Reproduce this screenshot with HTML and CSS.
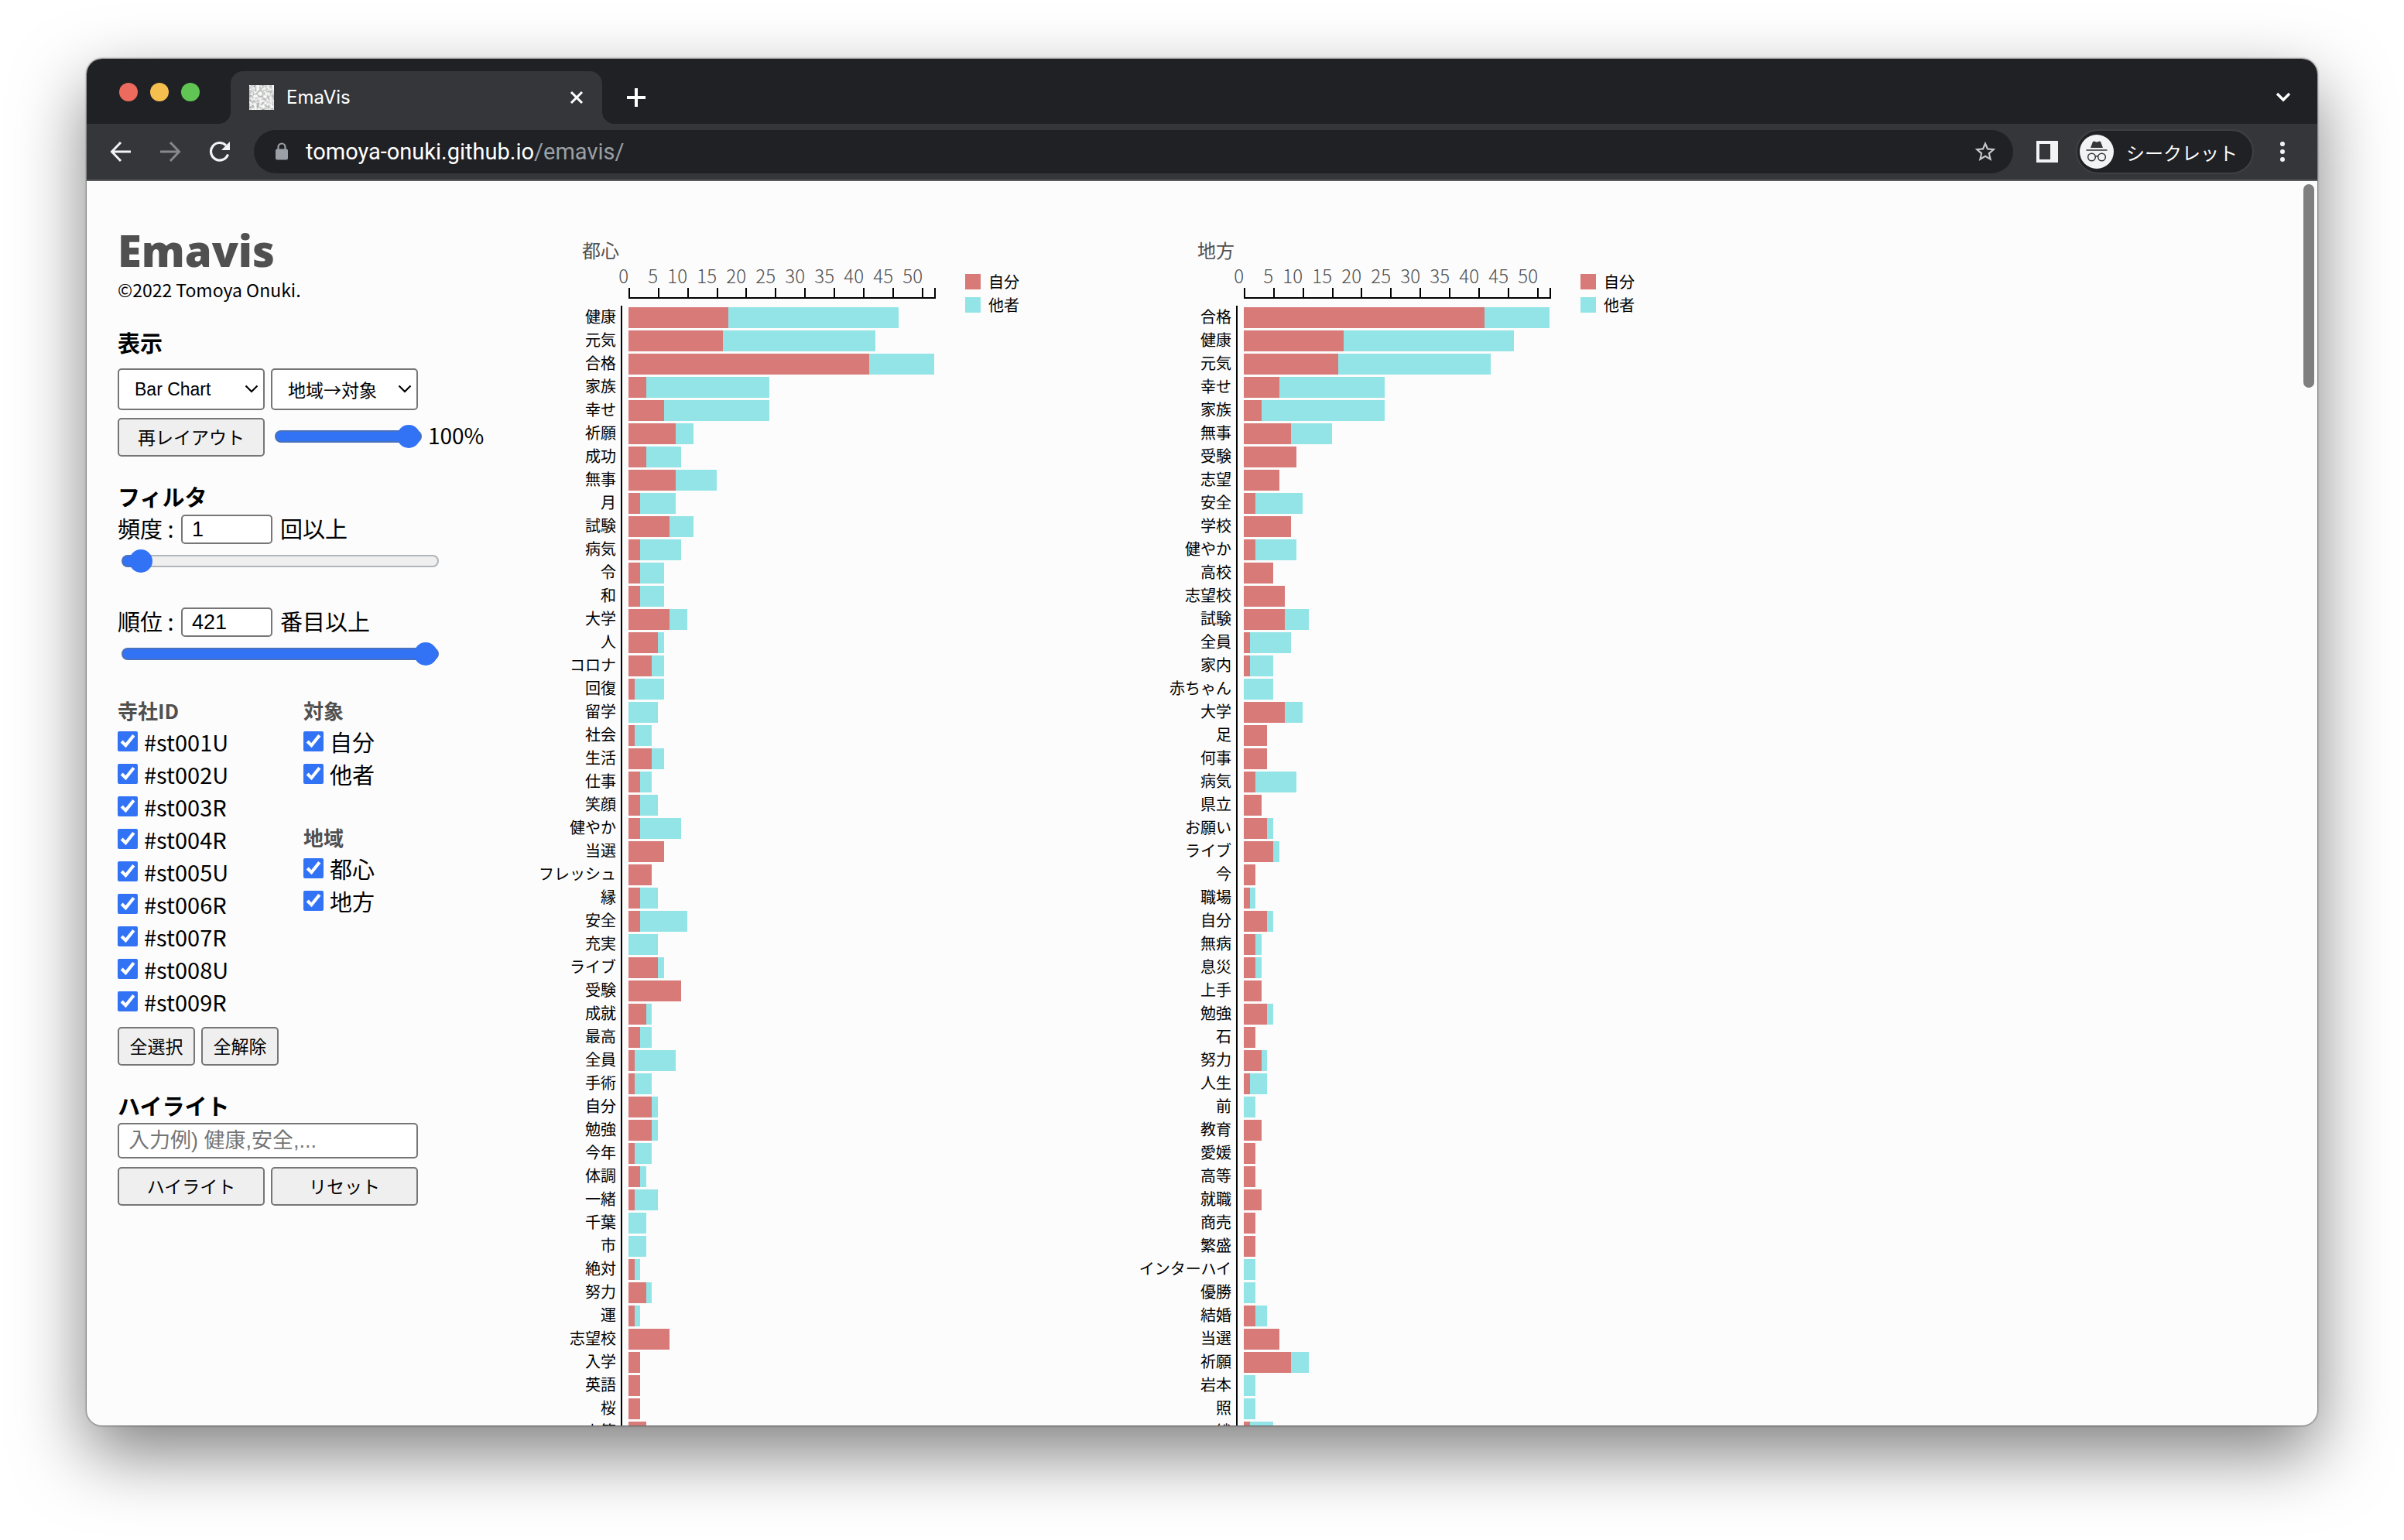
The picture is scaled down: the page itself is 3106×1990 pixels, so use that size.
FILE: index.html
```html
<!DOCTYPE html>
<html lang="ja">
<head>
<meta charset="utf-8">
<title>EmaVis</title>
<link rel="stylesheet" href="styles.css">
</head>
<body>
<div class="window">
  <header class="tabstrip">
    <div class="lights"><span class="light light-close"></span><span class="light light-min"></span><span class="light light-max"></span></div>
    <div class="tab">
      <svg class="favicon" viewBox="0 0 32 32" aria-hidden="true">
        <filter id="grain" x="0" y="0" width="1" height="1"><feTurbulence type="fractalNoise" baseFrequency="0.3" numOctaves="3" seed="4"/><feColorMatrix values="1.2 0 0 0 0.12  1.2 0 0 0 0.13  1.2 0 0 0 0.12  0 0 0 0 1"/></filter>
        <rect width="32" height="32" filter="url(#grain)"/>
      </svg>
      <span class="tab-title">EmaVis</span>
      <button class="icon-button tab-close" aria-label="閉じる"><svg width="18" height="18" viewBox="0 0 18 18"><path d="M2 2l14 14M16 2L2 16" stroke="#fff" stroke-width="3" fill="none"/></svg></button>
    </div>
    <button class="icon-button new-tab" aria-label="新しいタブ"><svg width="24" height="24" viewBox="0 0 24 24"><path d="M12 0v24M0 12h24" stroke="#fff" stroke-width="4" fill="none"/></svg></button>
    <button class="icon-button tab-list" aria-label="タブを検索"><svg width="20" height="14" viewBox="0 0 20 14"><path d="M2 2l8 8 8-8" stroke="#fff" stroke-width="3.4" fill="none"/></svg></button>
  </header>
  <nav class="toolbar">
    <button class="icon-button nav-button" aria-label="戻る"><svg width="28" height="28" viewBox="0 0 28 28"><path d="M27 14H3M14 2L2.500 14 14 26" stroke="#f1f3f4" stroke-width="3" fill="none"/></svg></button>
    <button class="icon-button nav-button" aria-label="進む"><svg width="28" height="28" viewBox="0 0 28 28"><path d="M1 14h24M14 2l11.500 12L14 26" stroke="#86888b" stroke-width="3" fill="none"/></svg></button>
    <button class="icon-button nav-button" aria-label="再読み込み"><svg width="28" height="28" viewBox="0 0 28 28"><path d="M24.500 17.500A11.300 11.300 0 1 1 22 6" stroke="#f1f3f4" stroke-width="3.200" fill="none"/><path d="M27 1v11H16z" fill="#f1f3f4"/></svg></button>
    <div class="omnibox">
      <svg width="18" height="24" viewBox="0 0 18 24" aria-hidden="true"><path d="M4.500 9V6a4.500 4.500 0 0 1 9 0v3" stroke="#9aa0a6" stroke-width="2.200" fill="none"/><rect x="1" y="8.500" width="16" height="14" rx="2" fill="#9aa0a6"/></svg>
      <span class="url">tomoya-onuki.github.io<span class="url-path">/emavis/</span></span>
      <button class="icon-button" aria-label="ブックマーク"><svg width="32" height="32" viewBox="0 0 24 24"><path fill="#c6c8ca" d="M22 9.240l-7.190-.62L12 2 9.190 8.630 2 9.240l5.460 4.730L5.820 21 12 17.270 18.180 21l-1.630-7.030L22 9.240zM12 15.400l-3.760 2.270 1-4.280-3.320-2.880 4.380-.38L12 6.100l1.710 4.040 4.380.38-3.320 2.880 1 4.280L12 15.400z"/></svg></button>
    </div>
    <button class="icon-button side-panel" aria-label="サイドパネル"><svg width="28" height="28" viewBox="0 0 28 28"><path fill="#f1f3f4" fill-rule="evenodd" d="M0 0h28v28H0zM4 4v20h14V4z"/></svg></button>
    <div class="profile">
      <svg width="44" height="44" viewBox="0 0 44 44" aria-hidden="true"><circle cx="22" cy="22" r="22" fill="#f1f3f4"/><path d="M14 17l3-8q2-1 3 0q2 1 4 0q1-1 3 0l3 8z" fill="#35363a"/><path d="M8.500 20h27" stroke="#35363a" stroke-width="1.600"/><g fill="none" stroke="#35363a" stroke-width="1.500"><circle cx="15.500" cy="29" r="4.800"/><circle cx="28.500" cy="29" r="4.800"/><path d="M20 28.500q2-1.500 4 0"/></g></svg>
      <span>シークレット</span>
    </div>
    <button class="icon-button menu" aria-label="メニュー"><svg width="8" height="28" viewBox="0 0 8 28" fill="#f1f3f4"><circle cx="4" cy="4" r="3"/><circle cx="4" cy="14" r="3"/><circle cx="4" cy="24" r="3"/></svg></button>
  </nav>
  <main class="page">
    <aside class="sidebar">
      <h1>Emavis</h1>
      <p class="copyright">©2022 Tomoya Onuki.</p>

      <h2 class="display-heading">表示</h2>
      <div class="pair selects">
        <select aria-label="グラフの種類"><option>Bar Chart</option></select>
        <select class="select-ja" aria-label="分類"><option>地域→対象</option></select>
      </div>
      <div class="pair layout-row">
        <button class="button">再レイアウト</button>
        <label class="scale"><input type="range" class="range range-full" min="0" max="100" value="100"><span>100%</span></label>
      </div>

      <h2 class="section-heading">フィルタ</h2>
      <div class="filter-row"><label for="freq">頻度 :</label><input id="freq" class="number" type="text" value="1"><span>回以上</span></div>
      <input type="range" class="range range-wide range-low" min="0" max="100" value="2" aria-label="頻度">
      <div class="filter-row rank-row"><label for="rank">順位 :</label><input id="rank" class="number" type="text" value="421"><span>番目以上</span></div>
      <input type="range" class="range range-wide range-full" min="1" max="421" value="421" aria-label="順位">

      <div class="checks">
        <fieldset>
          <legend>寺社ID</legend>
          <label><input type="checkbox" checked>#st001U</label>
          <label><input type="checkbox" checked>#st002U</label>
          <label><input type="checkbox" checked>#st003R</label>
          <label><input type="checkbox" checked>#st004R</label>
          <label><input type="checkbox" checked>#st005U</label>
          <label><input type="checkbox" checked>#st006R</label>
          <label><input type="checkbox" checked>#st007R</label>
          <label><input type="checkbox" checked>#st008U</label>
          <label><input type="checkbox" checked>#st009R</label>
        </fieldset>
        <div class="check-groups">
          <fieldset>
            <legend>対象</legend>
            <label><input type="checkbox" checked>自分</label>
            <label><input type="checkbox" checked>他者</label>
          </fieldset>
          <fieldset>
            <legend>地域</legend>
            <label><input type="checkbox" checked>都心</label>
            <label><input type="checkbox" checked>地方</label>
          </fieldset>
        </div>
      </div>
      <div class="select-all"><button class="button">全選択</button><button class="button">全解除</button></div>

      <h2 class="section-heading"><label for="highlight">ハイライト</label></h2>
      <input id="highlight" class="highlight" type="text" placeholder="入力例) 健康,安全,...">
      <div class="pair"><button class="button">ハイライト</button><button class="button">リセット</button></div>
    </aside>
    <section class="chart" data-chart="urban">
      <div class="plot">
        <h3>都心</h3>
        <div class="axis-labels"></div>
        <div class="axis"></div>
        <ol class="rows"></ol>
      </div>
      <ul class="legend"><li><i class="swatch self"></i>自分</li><li><i class="swatch other"></i>他者</li></ul>
    </section>
    <section class="chart" data-chart="rural">
      <div class="plot">
        <h3>地方</h3>
        <div class="axis-labels"></div>
        <div class="axis"></div>
        <ol class="rows"></ol>
      </div>
      <ul class="legend"><li><i class="swatch self"></i>自分</li><li><i class="swatch other"></i>他者</li></ul>
    </section>
    <div class="scroll-thumb"></div>
  </main>
</div>
<script src="script.js"></script>
</body>
</html>
```
FILE: styles.css
```css
* { box-sizing: border-box; }

body {
  margin: 0;
  height: 100vh;
  padding: 76px 112px 148px;
  background: #fff;
  color: #000;
  font-family: "Noto Sans CJK JP", "Noto Sans", sans-serif;
  font-size: 29px;
}

h1, h2, h3, p, ol, ul, fieldset { margin: 0; padding: 0; border: 0; list-style: none; }

.window {
  display: flex;
  flex-direction: column;
  height: 100%;
  border-radius: 20px;
  overflow: hidden;
  background: #fcfcfc;
  box-shadow: 0 0 2px 1px rgba(0, 0, 0, 0.4), 0 36px 90px rgba(0, 0, 0, 0.5);
}

/* Browser chrome */
.icon-button {
  display: flex;
  align-items: center;
  justify-content: center;
  padding: 0;
  border: 0;
  background: none;
}

.tabstrip {
  display: flex;
  flex: none;
  height: 84px;
  padding-top: 16px;
  background: #202124;
}

.lights { display: flex; gap: 16px; padding: 15px 0 0 42px; width: 186px; }
.light { width: 24px; height: 24px; border-radius: 50%; }
.light-close { background: #ed6a5e; }
.light-min { background: #f5bf4f; }
.light-max { background: #61c554; }

.tab {
  position: relative;
  display: flex;
  align-items: center;
  width: 480px;
  padding: 0 24px;
  border-radius: 16px 16px 0 0;
  background: #35363a;
}
.tab::before, .tab::after {
  content: "";
  position: absolute;
  bottom: 0;
  width: 16px;
  height: 16px;
}
.tab::before { left: -16px; background: radial-gradient(circle at 0 0, transparent 16px, #35363a 16px); }
.tab::after { right: -16px; background: radial-gradient(circle at 100% 0, transparent 16px, #35363a 16px); }
.favicon { width: 32px; height: 32px; }
.tab-title { margin-left: 16px; flex: 1; color: #fff; font: 24px/32px Inter, sans-serif; }
.new-tab { width: 88px; }
.tab-list { width: 88px; margin-left: auto; }

.toolbar {
  display: flex;
  flex: none;
  align-items: center;
  height: 74px;
  padding-left: 12px;
  border-bottom: 2px solid #5a5b5f;
  background: #35363a;
}
.nav-button { width: 64px; height: 56px; }
.omnibox {
  display: flex;
  flex: 1;
  align-items: center;
  height: 56px;
  margin-left: 12px;
  padding: 0 20px 0 27px;
  border-radius: 28px;
  background: #202124;
}
.url { flex: 1; margin-left: 22px; color: #fff; font: 29px/40px Roboto, sans-serif; }
.url-path { color: #9aa0a6; }
.side-panel { width: 81px; height: 56px; padding-left: 6px; }
.profile {
  display: flex;
  align-items: center;
  gap: 16px;
  width: 230px;
  height: 58px;
  padding-left: 3px;
  border: 2px solid #3f4044;
  border-radius: 29px;
  background: #202124;
  color: #fff;
  font-size: 24px;
}
.menu { width: 74px; height: 56px; margin-right: 8px; }

/* Page */
.page {
  position: relative;
  display: flex;
  flex: 1;
  min-height: 0;
  overflow: hidden;
}
.scroll-thumb {
  position: absolute;
  top: 4px;
  right: 4px;
  width: 14px;
  height: 263px;
  border-radius: 7px;
  background: #7f7f7f;
}

.sidebar { flex: none; width: 560px; padding: 59px 0 0 40px; }
h1 { color: #505050; font: 800 56px/60px "Open Sans", sans-serif; }
.copyright { margin-top: 6px; font-size: 23px; line-height: 30px; }
h2 { font-size: 29px; line-height: 42px; font-weight: 700; }
.display-heading { margin-top: 32px; }
.section-heading { margin-top: 30px; }

.pair { display: flex; gap: 8px; }
.pair > .button, select { width: 190px; }
.selects { margin-top: 13px; }
.layout-row { margin-top: 10px; }

select, .button, .number, .highlight {
  border: 2px solid #767676;
  border-radius: 5px;
  color: #000;
  font-family: "Liberation Sans", "Noto Sans CJK JP", sans-serif;
}
select {
  height: 54px;
  padding: 0 0 0 20px;
  appearance: none;
  background: #fff url("data:image/svg+xml,%3Csvg xmlns='http://www.w3.org/2000/svg' width='18' height='12'%3E%3Cpath d='M1.500 1.500L9 9l7.500-7.500' fill='none' stroke='%23000' stroke-width='2.200'/%3E%3C/svg%3E") no-repeat right 6px center;
  font-size: 23px;
}
.select-ja { font-family: "Noto Sans CJK JP", sans-serif; }
.button { height: 50px; padding: 0 0 2px; background: #efefef; font-size: 23px; }

.scale { display: flex; align-items: center; gap: 8px; height: 48px; margin-left: 5px; font-size: 28px; }
.scale span, .filter-row label, .filter-row span { padding-bottom: 4px; }
.range {
  display: block;
  appearance: none;
  width: 190px;
  height: 32px;
  margin: 0;
  background: none;
}
.range::-webkit-slider-runnable-track {
  height: 16px;
  border: 2px solid rgba(100, 110, 120, 0.45);
  border-radius: 8px;
  background: linear-gradient(to right, #3273f6 var(--fill), #efefef var(--fill)) border-box;
}
.range::-webkit-slider-thumb {
  appearance: none;
  width: 30px;
  height: 30px;
  margin-top: -9px;
  border-radius: 50%;
  background: #3273f6;
}
.range-full { --fill: 100%; }
.range-low { --fill: 5%; }
.range-wide { width: 410px; margin: 5px 0 0 5px; }

.filter-row { display: flex; align-items: center; height: 40px; margin-top: 2px; line-height: 36px; }
.filter-row label { width: 82px; }
.rank-row { margin-top: 43px; }
.number { width: 118px; height: 38px; margin-right: 10px; padding: 0 12px; background: #fff; font-size: 27px; }

.checks { display: flex; margin-top: 38px; }
.checks > fieldset { width: 240px; }
fieldset { min-width: 0; }
legend { padding: 0; height: 38px; color: #505050; font-size: 26px; font-weight: 700; line-height: 38px; }
fieldset label { display: flex; align-items: center; gap: 8px; height: 42px; line-height: 42px; }
fieldset input { width: 26px; height: 26px; margin: 0; accent-color: #3273f6; }
.check-groups { display: flex; flex-direction: column; gap: 42px; }
.select-all { display: flex; gap: 8px; margin-top: 12px; }
.select-all .button { width: 100px; }
.highlight { display: block; width: 388px; height: 46px; margin: 2px 0 11px; padding: 0 12px; background: #fff; font-size: 27px; }
.highlight::placeholder { color: #757575; }

/* Charts */
.chart { display: flex; flex: none; gap: 38px; width: 795px; padding-top: 74px; }
.plot { width: 537px; }
h3 { padding-left: 80px; color: #505050; font-size: 24px; font-weight: 400; line-height: 30px; }
.axis-labels {
  display: flex;
  margin: 6px 0 4px 102px;
  color: #505050;
  font-size: 24px;
  font-weight: 300;
  line-height: 24px;
}
.axis-labels span { flex: none; width: 38px; text-align: right; }
.axis {
  display: flex;
  height: 14px;
  margin: 0 0 9px 140px;
  border-right: 2px solid #000;
  border-bottom: 2px solid #000;
}
.axis i { flex: 5; border-left: 2px solid #000; }
.axis i:last-child { flex: 2; }

.row { display: flex; height: 30px; }
.row-label { width: 130px; padding-right: 6px; font-size: 20px; line-height: 28px; text-align: right; white-space: nowrap; }
.bars { display: flex; width: 405px; padding: 2px 0 1px 8px; border-left: 2px solid #000; }
.self { background: #d87a78; }
.other { background: #93e4e6; }

.legend { margin-top: 41px; font-size: 20px; }
.legend li { display: flex; align-items: center; gap: 10px; height: 30px; line-height: 30px; }
.swatch { width: 20px; height: 20px; }
```
FILE: script.js
```js
// Each entry: word, count for 自分, count for 他者
const MAX = 52;
const data = {
  urban: [
    ["健康", 17, 29], ["元気", 16, 26], ["合格", 41, 11], ["家族", 3, 21], ["幸せ", 6, 18],
    ["祈願", 8, 3], ["成功", 3, 6], ["無事", 8, 7], ["月", 2, 6], ["試験", 7, 4],
    ["病気", 2, 7], ["令", 2, 4], ["和", 2, 4], ["大学", 7, 3], ["人", 5, 1],
    ["コロナ", 4, 2], ["回復", 1, 5], ["留学", 0, 5], ["社会", 1, 3], ["生活", 4, 2],
    ["仕事", 2, 2], ["笑顔", 2, 3], ["健やか", 2, 7], ["当選", 6, 0], ["フレッシュ", 4, 0],
    ["縁", 2, 3], ["安全", 2, 8], ["充実", 0, 5], ["ライブ", 5, 1], ["受験", 9, 0],
    ["成就", 3, 1], ["最高", 2, 2], ["全員", 1, 7], ["手術", 1, 3], ["自分", 4, 1],
    ["勉強", 4, 1], ["今年", 1, 3], ["体調", 2, 1], ["一緒", 1, 4], ["千葉", 0, 3],
    ["市", 0, 3], ["絶対", 1, 1], ["努力", 3, 1], ["運", 1, 1], ["志望校", 7, 0],
    ["入学", 2, 0], ["英語", 2, 0], ["桜", 2, 0], ["上等", 3, 0]
  ],
  rural: [
    ["合格", 41, 11], ["健康", 17, 29], ["元気", 16, 26], ["幸せ", 6, 18], ["家族", 3, 21],
    ["無事", 8, 7], ["受験", 9, 0], ["志望", 6, 0], ["安全", 2, 8], ["学校", 8, 0],
    ["健やか", 2, 7], ["高校", 5, 0], ["志望校", 7, 0], ["試験", 7, 4], ["全員", 1, 7],
    ["家内", 1, 4], ["赤ちゃん", 0, 5], ["大学", 7, 3], ["足", 4, 0], ["何事", 4, 0],
    ["病気", 2, 7], ["県立", 3, 0], ["お願い", 4, 1], ["ライブ", 5, 1], ["今", 2, 0],
    ["職場", 1, 1], ["自分", 4, 1], ["無病", 2, 1], ["息災", 2, 1], ["上手", 3, 0],
    ["勉強", 4, 1], ["石", 2, 0], ["努力", 3, 1], ["人生", 1, 3], ["前", 0, 2],
    ["教育", 3, 0], ["愛媛", 2, 0], ["高等", 2, 0], ["就職", 3, 0], ["商売", 2, 0],
    ["繁盛", 2, 0], ["インターハイ", 0, 2], ["優勝", 0, 2], ["結婚", 2, 2], ["当選", 6, 0],
    ["祈願", 8, 3], ["岩本", 0, 2], ["照", 0, 2], ["絆", 1, 4]
  ]
};

const make = (tag, className, text) => {
  const node = document.createElement(tag);
  if (className) node.className = className;
  if (text !== undefined) node.textContent = text;
  return node;
};

document.querySelectorAll(".chart").forEach((chart) => {
  for (let v = 0; v <= 50; v += 5) {
    chart.querySelector(".axis-labels").append(make("span", "", v));
    chart.querySelector(".axis").append(make("i"));
  }
  data[chart.dataset.chart].forEach(([word, self, other]) => {
    const row = make("li", "row");
    const bars = make("div", "bars");
    [["self", self], ["other", other]].forEach(([kind, count]) => {
      const bar = make("span", kind);
      bar.style.width = (count / MAX) * 100 + "%";
      bars.append(bar);
    });
    row.append(make("span", "row-label", word), bars);
    chart.querySelector(".rows").append(row);
  });
});
```
